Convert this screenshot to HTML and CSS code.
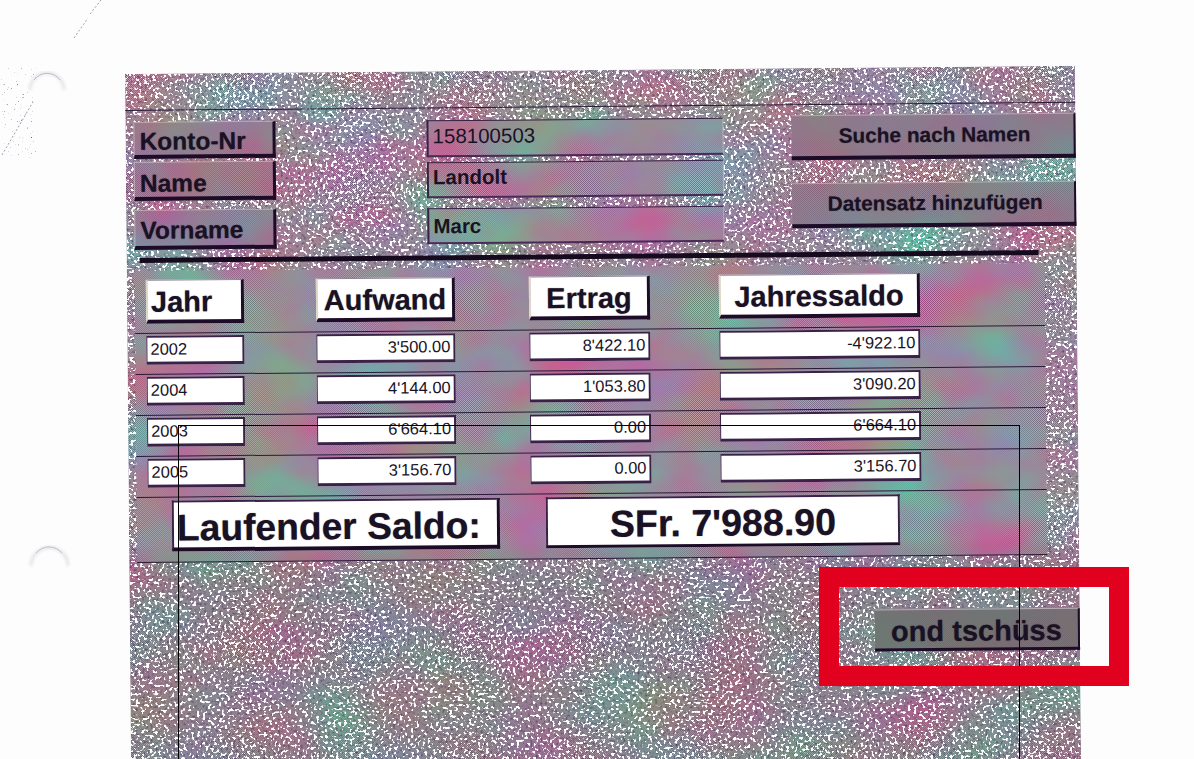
FILE: index.html
```html
<!DOCTYPE html>
<html lang="de">
<head>
<meta charset="utf-8">
<title>Konto</title>
<link rel="stylesheet" href="styles.css">
</head>
<body>
<div class="page">
<svg class="scan-marks" width="1194" height="759" viewBox="0 0 1194 759" aria-hidden="true">
  <defs>
    <filter id="dust" x="0" y="0" width="100%" height="100%" color-interpolation-filters="sRGB">
      <feTurbulence type="fractalNoise" baseFrequency="0.7" numOctaves="1" seed="4"/>
      <feColorMatrix type="matrix" values="0 0 0 0 .45  0 0 0 0 .35  0 0 0 0 .5  9 0 0 0 -6.2"/>
    </filter>
    <filter id="soft"><feGaussianBlur stdDeviation="1.4"/></filter>
  </defs>
  <path class="dust-band" d="M0 158L0 88L30 68L36 100Z" filter="url(#dust)"/>
  <path class="tear" d="M2 155L33 102M74 38L88 18M90 14L101 0"/>
  <path class="hole-shade" d="M30 90A17 17 0 0 1 64 90" filter="url(#soft)"/>
  <path class="hole-rim" d="M34 80A16 16 0 0 1 60 80"/>
  <path class="hole-shade" d="M31 566A18 18 0 0 1 68 566" filter="url(#soft)"/>
  <path class="hole-rim" d="M36 553A17 17 0 0 1 62 553"/>
</svg>

<main class="sheet">
  <svg class="texture" width="950" height="725" aria-hidden="true">
    <defs>
      <filter id="blotch" x="0" y="0" width="100%" height="100%" color-interpolation-filters="sRGB">
        <feTurbulence type="fractalNoise" baseFrequency="0.011 0.015" numOctaves="3" seed="11"/>
        <feColorMatrix type="matrix" values=".5 -.4 0 0 .58  -.36 .48 0 0 .5  -.3 -.2 0 0 .88  0 0 0 0 1"/>
      </filter>
      <filter id="white-speck" x="0" y="0" width="100%" height="100%" color-interpolation-filters="sRGB">
        <feTurbulence type="fractalNoise" baseFrequency="0.36" numOctaves="2" seed="7"/>
        <feColorMatrix type="matrix" values="0 0 0 0 1  0 0 0 0 1  0 0 0 0 1  22 0 0 0 -12.4"/>
      </filter>
      <filter id="dark-speck" x="0" y="0" width="100%" height="100%" color-interpolation-filters="sRGB">
        <feTurbulence type="fractalNoise" baseFrequency="0.4" numOctaves="2" seed="23"/>
        <feColorMatrix type="matrix" values="0 0 0 0 .34  0 0 0 0 .24  0 0 0 0 .38  0 3 0 0 -1.55"/>
      </filter>
      <pattern id="dither" width="2" height="2" patternUnits="userSpaceOnUse">
        <rect width="1" height="1" fill="#2c1836" fill-opacity=".34"/>
        <rect x="1" y="1" width="1" height="1" fill="#2c1836" fill-opacity=".34"/>
        <rect x="1" width="1" height="1" fill="#fff" fill-opacity=".25"/>
        <rect y="1" width="1" height="1" fill="#fff" fill-opacity=".25"/>
      </pattern>
      <linearGradient id="lower" x1="0" y1="0" x2="0" y2="1">
        <stop offset="0" stop-color="#555" stop-opacity="0"/>
        <stop offset=".65" stop-color="#555" stop-opacity="0"/>
        <stop offset=".72" stop-color="#777" stop-opacity=".35"/>
        <stop offset="1" stop-color="#777" stop-opacity=".35"/>
      </linearGradient>
      <mask id="speck-area" maskUnits="userSpaceOnUse" x="0" y="0" width="950" height="725">
        <rect width="950" height="725" fill="#fff"/>
        <g fill="#000">
          <rect x="8" y="48" width="142" height="37"/>
          <rect x="8" y="88" width="142" height="39"/>
          <rect x="8" y="136" width="142" height="40"/>
          <rect x="301" y="49" width="297" height="37"/>
          <rect x="301" y="91" width="297" height="36"/>
          <rect x="301" y="137" width="297" height="36"/>
          <rect x="666" y="47" width="284" height="45"/>
          <rect x="666" y="115" width="284" height="45"/>
          <rect x="8" y="197" width="910" height="292"/>
          <rect x="745" y="541" width="205" height="42"/>
        </g>
      </mask>
    </defs>
    <rect width="950" height="725" filter="url(#blotch)"/>
    <rect width="950" height="725" fill="url(#dither)"/>
    <rect width="950" height="725" fill="url(#lower)"/>
    <g mask="url(#speck-area)">
      <rect width="950" height="725" filter="url(#dark-speck)"/>
      <rect width="950" height="725" filter="url(#white-speck)"/>
    </g>
  </svg>

  <header class="head">
    <div class="stack">
      <div class="label label-first">Konto-Nr</div>
      <div class="label label-second">Name</div>
      <div class="label label-third">Vorname</div>
    </div>
    <div class="stack">
      <div class="value value-first value-plain">158100503</div>
      <div class="value value-second">Landolt</div>
      <div class="value value-third">Marc</div>
    </div>
    <div class="stack">
      <div class="action action-first">Suche nach Namen</div>
      <div class="action action-second">Datensatz hinzufügen</div>
    </div>
  </header>

  <div class="rule"></div>

  <section class="panel">
    <div class="row row-head">
      <div class="title col-year title-year">Jahr</div>
      <div class="title col-out">Aufwand</div>
      <div class="title col-in">Ertrag</div>
      <div class="title col-sum">Jahressaldo</div>
    </div>
    <div class="row">
      <div class="field col-year field-year">2002</div>
      <div class="field col-out">3'500.00</div>
      <div class="field col-in">8'422.10</div>
      <div class="field col-sum">-4'922.10</div>
    </div>
    <div class="row">
      <div class="field col-year field-year">2004</div>
      <div class="field col-out">4'144.00</div>
      <div class="field col-in">1'053.80</div>
      <div class="field col-sum">3'090.20</div>
    </div>
    <div class="row">
      <div class="field col-year field-year">2003</div>
      <div class="field col-out">6'664.10</div>
      <div class="field col-in">0.00</div>
      <div class="field col-sum">6'664.10</div>
    </div>
    <div class="row">
      <div class="field col-year field-year">2005</div>
      <div class="field col-out">3'156.70</div>
      <div class="field col-in">0.00</div>
      <div class="field col-sum">3'156.70</div>
    </div>
    <div class="total-row">
      <div class="total total-label">Laufender Saldo:</div>
      <div class="total total-value">SFr. 7'988.90</div>
    </div>
  </section>

  <footer class="foot">
    <div class="bye">ond tschüss</div>
  </footer>
</main>

<div class="crop-frame"></div>
<div class="red-mark"></div>
</div>
</body>
</html>
```

FILE: styles.css
```css
html, body {
  margin: 0;
  background: #fdfdfe;
}

body {
  font-family: "Liberation Sans", Arial, sans-serif;
  color: #1a1224;
}

.page {
  position: relative;
  width: 1194px;
  height: 759px;
  overflow: hidden;
}

.scan-marks {
  position: absolute;
  left: 0;
  top: 0;
}

.tear { fill: none; stroke: #a89cb0; stroke-width: 1; stroke-dasharray: 2 2; }
.hole-shade { fill: none; stroke: #e4e4e8; stroke-width: 3; }
.hole-rim { fill: none; stroke: #c4bcc8; stroke-width: 1; }

.sheet {
  position: absolute;
  left: 125px;
  top: 74px;
  width: 950px;
  height: 725px;
  box-sizing: border-box;
  padding-top: 36px;
  transform: rotate(-0.5deg);
  transform-origin: 0 0;
}

.texture {
  position: absolute;
  left: 0;
  top: 0;
}

.head {
  position: relative;
  display: grid;
  grid-template-columns: 293px 365px 284px;
  height: 148px;
  box-sizing: border-box;
  padding-left: 8px;
  border-top: 1px solid #2a1a38;
}

.stack {
  display: flex;
  flex-direction: column;
}

.label, .value, .action {
  display: flex;
  align-items: center;
  box-sizing: border-box;
}

.label {
  width: 142px;
  padding: 5px 0 0 5px;
  font-size: 24.5px;
  font-weight: 700;
  text-shadow: 0 0 1px rgba(26, 18, 36, .6);
  background: rgba(130, 100, 130, .28);
  border-top: 1px solid rgba(220, 220, 200, .5);
  border-left: 1px solid rgba(220, 220, 200, .5);
  border-right: 3px solid #1d0c28;
  border-bottom: 4px solid #1d0c28;
}

.label-first { margin-top: 11px; height: 37px; }
.label-second { margin-top: 3px; height: 39px; padding-top: 7px; }
.label-third { margin-top: 9px; height: 40px; }

.value {
  width: 297px;
  padding: 0 0 5px 4px;
  font-size: 20.5px;
  font-weight: 700;
  border-top: 1px solid #3a2148;
  border-left: 2px solid #3a2148;
  border-bottom: 2px solid #4a2a58;
  border-right: 1px solid rgba(220, 220, 200, .5);
}

.value-plain { font-weight: 400; }
.value-first { margin-top: 12px; height: 37px; }
.value-second { margin-top: 5px; height: 36px; }
.value-third { margin-top: 10px; height: 36px; padding-bottom: 0; }

.action {
  width: 284px;
  height: 45px;
  justify-content: center;
  padding-left: 4px;
  font-size: 20.8px;
  font-weight: 700;
  text-shadow: 0 0 1px rgba(26, 18, 36, .5);
  background: rgba(125, 110, 125, .5);
  border-top: 1px solid rgba(230, 220, 220, .45);
  border-right: 2px solid #1d0c28;
  border-bottom: 4px solid #1d0c28;
}

.action-first { margin-top: 10px; }
.action-second { margin-top: 23px; }

.rule {
  position: relative;
  width: 899px;
  height: 5px;
  margin-left: 13px;
  background: #160a1e;
}

.panel {
  position: relative;
  width: 910px;
  margin: 7px 0 0 8px;
  border-bottom: 1px solid #2a1a38;
}

.row {
  display: grid;
  grid-template-columns: 170px 213px 190px 201px;
  height: 41px;
  box-sizing: border-box;
  padding: 2px 0 0 11px;
  border-top: 1px solid #2a1a38;
}

.row-head {
  height: 63px;
  padding-top: 10px;
  border-top: 0;
}

.col-year { width: 98px; }
.col-out { width: 139px; }
.col-in { width: 121px; }
.col-sum { width: 201px; }

.title {
  display: flex;
  align-items: center;
  justify-content: center;
  box-sizing: border-box;
  height: 44px;
  padding-top: 3px;
  background: #fff;
  font-size: 29px;
  font-weight: 700;
  text-shadow: 0 0 1px rgba(26, 18, 36, .6);
  border-top: 1px solid #8d8398;
  border-left: 2px solid #dcd6c6;
  border-right: 3px solid #1d0c28;
  border-bottom: 4px solid #1d0c28;
}

.title-year {
  justify-content: flex-start;
  padding-left: 3px;
}

.field {
  box-sizing: border-box;
  height: 29px;
  background: #fff;
  font-size: 16.5px;
  line-height: 23px;
  text-align: right;
  padding-right: 3px;
  border-top: 2px solid #3a2148;
  border-left: 1px solid #3a2148;
  border-right: 2px solid #3a2148;
  border-bottom: 3px solid #3a2148;
}

.field-year {
  text-align: left;
  padding-left: 3px;
}

.total-row {
  display: flex;
  gap: 46px;
  height: 65px;
  box-sizing: border-box;
  padding: 3px 0 0 35px;
  border-top: 1px solid #2a1a38;
}

.total {
  display: flex;
  align-items: center;
  box-sizing: border-box;
  height: 51px;
  padding-top: 5px;
  background: #fff;
  font-size: 37.6px;
  font-weight: 700;
  text-shadow: 0 0 1px rgba(26, 18, 36, .6);
  border-top: 2px solid #3a2148;
  border-left: 2px solid #3a2148;
  border-bottom: 4px solid #1d0c28;
}

.total-label {
  width: 328px;
  padding-left: 3px;
  font-size: 37.2px;
  border-right: 3px solid #1d0c28;
}

.total-value {
  width: 354px;
  justify-content: center;
  border-right: 2px solid #3a2148;
  border-bottom-width: 3px;
}

.foot {
  position: relative;
  display: flex;
  justify-content: flex-end;
  margin-top: 53px;
}

.bye {
  display: flex;
  align-items: center;
  justify-content: center;
  box-sizing: border-box;
  width: 205px;
  height: 42px;
  padding-top: 4px;
  font-size: 29px;
  font-weight: 700;
  text-shadow: 0 0 1px rgba(26, 18, 36, .6);
  background: rgba(105, 108, 105, .72);
  border-top: 1px solid rgba(230, 210, 225, .6);
  border-right: 2px solid #1d0c28;
  border-bottom: 3px solid #1d0c28;
}

.crop-frame {
  position: absolute;
  left: 178px;
  top: 425px;
  right: 174px;
  bottom: 0;
  border: 1px solid #000;
  border-bottom: 0;
}

.red-mark {
  position: absolute;
  left: 819px;
  top: 567px;
  width: 270px;
  height: 79px;
  border: 20px solid #e2001f;
}
```
